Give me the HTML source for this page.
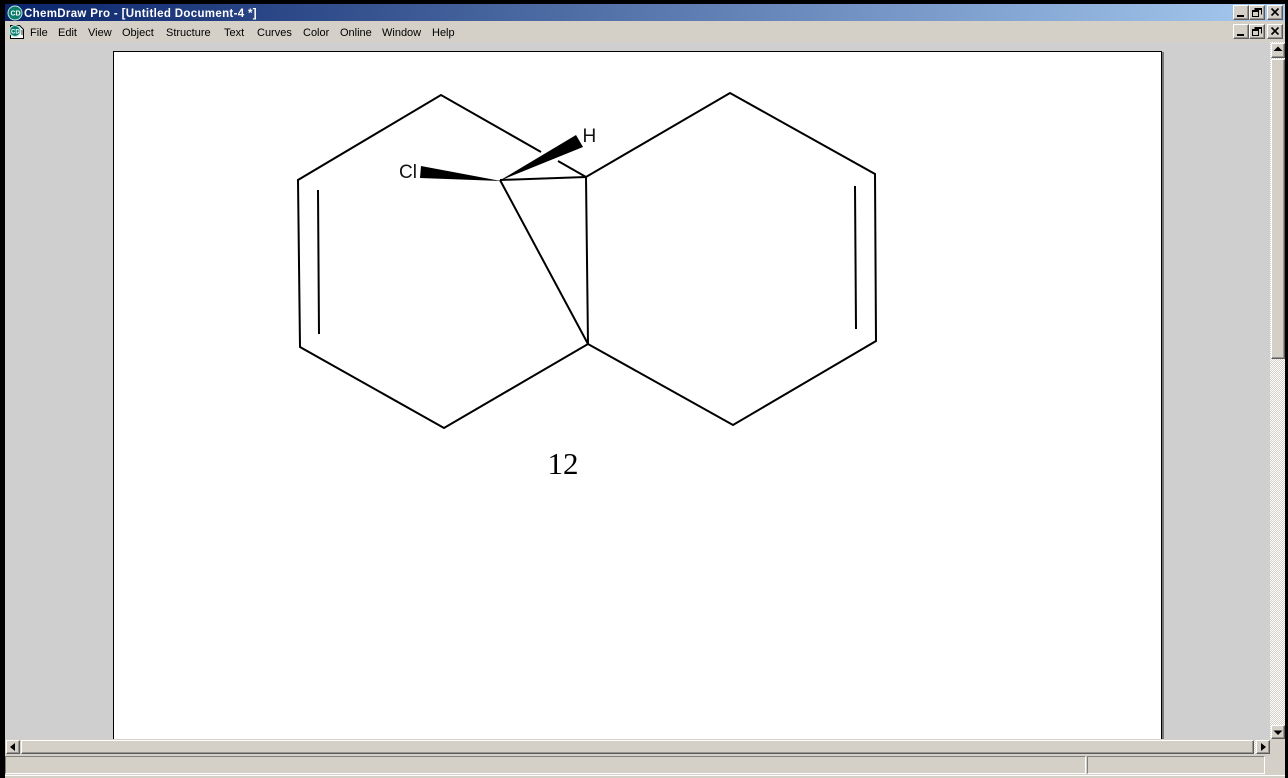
<!DOCTYPE html>
<html><head><meta charset="utf-8"><style>
html,body{margin:0;padding:0;background:#000;}
#r{position:relative;width:1288px;height:778px;overflow:hidden;background:#000;font-family:"Liberation Sans",sans-serif;}
#r div{position:absolute;box-sizing:border-box;}
.b{background:#d4d0c8;border:1px solid;border-color:#fff #5c5c5c #5c5c5c #fff;box-shadow:inset -1px -1px 0 #989590;}
.m{font-size:11px;top:27px;color:#000;line-height:13px;white-space:nowrap;}
svg{position:absolute;left:0;top:0;overflow:visible;}
</style></head><body><div id="r">
<div style="left:5px;top:4px;width:1280px;height:17px;background:linear-gradient(90deg,#0a246a,#a6caf0);"></div>
<div style="left:5px;top:21px;width:1280px;height:21px;background:#d4d0c8;"></div>
<div style="left:5px;top:42px;width:1265px;height:697px;background:#cfcfcf;"></div>
<div style="left:113px;top:51px;width:1049px;height:688px;background:#fff;border:solid #000;border-width:1px 1px 0 1px;"></div>
<div style="left:1162px;top:52px;width:2px;height:687px;background:#777;"></div>
<div style="left:1270px;top:42px;width:15px;height:697px;background:#e9e7e3;background-image:repeating-conic-gradient(#d4d0c8 0 25%,#fff 0 50%);background-size:2px 2px;"></div>
<div style="left:24px;top:7px;font-size:11.5px;font-weight:bold;color:#fff;line-height:15px;white-space:nowrap;letter-spacing:.33px;">ChemDraw Pro - [Untitled Document-4 *]</div>
<div class="m" style="left:30px;">File</div>
<div class="m" style="left:58px;">Edit</div>
<div class="m" style="left:88px;">View</div>
<div class="m" style="left:122px;">Object</div>
<div class="m" style="left:166px;">Structure</div>
<div class="m" style="left:224px;">Text</div>
<div class="m" style="left:257px;">Curves</div>
<div class="m" style="left:303px;">Color</div>
<div class="m" style="left:340px;">Online</div>
<div class="m" style="left:382px;">Window</div>
<div class="m" style="left:432px;">Help</div>
<div class="b" style="left:1233px;top:5px;width:16px;height:15px;"></div>
<div class="b" style="left:1249px;top:5px;width:16px;height:15px;"></div>
<div class="b" style="left:1267px;top:5px;width:16px;height:15px;"></div>
<div class="b" style="left:1233px;top:24px;width:16px;height:15px;"></div>
<div class="b" style="left:1249px;top:24px;width:16px;height:15px;"></div>
<div class="b" style="left:1267px;top:24px;width:16px;height:15px;"></div>
<div class="b" style="left:1271px;top:43px;width:14px;height:15px;"></div>
<div class="b" style="left:1271px;top:59px;width:14px;height:300px;"></div>
<div class="b" style="left:1271px;top:725px;width:14px;height:14px;"></div>
<div style="left:5px;top:739px;width:1265px;height:17px;background:#d4d0c8;"></div>
<div style="left:1253px;top:740px;width:3px;height:14px;background-image:repeating-conic-gradient(#d4d0c8 0 25%,#fff 0 50%);background-size:2px 2px;"></div>
<div style="left:1270px;top:739px;width:15px;height:39px;background:#d4d0c8;"></div>
<div class="b" style="left:6px;top:740px;width:14px;height:14px;"></div>
<div class="b" style="left:21px;top:740px;width:1233px;height:14px;"></div>
<div class="b" style="left:1256px;top:740px;width:14px;height:14px;"></div>
<div style="left:5px;top:754px;width:1280px;height:24px;background:#d4d0c8;"></div>
<div style="left:5px;top:756px;width:1081px;height:18px;border:1px solid;border-color:#808080 #fff #fff #808080;"></div>
<div style="left:1087px;top:756px;width:178px;height:18px;border:1px solid;border-color:#808080 #fff #fff #808080;"></div>
<div style="left:5px;top:775px;width:1280px;height:1px;background:#fff;"></div>
<svg width="1288" height="778" viewBox="0 0 1288 778">
<g fill="none" stroke="#000" stroke-width="2">
<polyline points="541,152 441,95 298,180 300,347 444,428 588,344 733,425 876,341 875,174 730,93 586,177 558,161"/>
<line x1="318" y1="190" x2="319" y2="334"/>
<line x1="855" y1="186" x2="856" y2="329"/>
<line x1="586" y1="177" x2="588" y2="344"/>
<line x1="500" y1="180" x2="588" y2="344"/>
<line x1="500" y1="180" x2="586" y2="177"/>
</g>
<polygon points="501,181 421,166 420,178" fill="#000"/>
<polygon points="499,181 576,135 583,147" fill="#000"/>
<text x="399" y="178" font-family="Liberation Sans" font-size="19" fill="#111">Cl</text>
<text x="582.500" y="142" font-family="Liberation Sans" font-size="19" fill="#111">H</text>
<text x="547.500" y="474" font-family="Liberation Serif" font-size="31" fill="#000">12</text>
<circle cx="15" cy="13" r="7" fill="#0b7d6c" stroke="#bfe6de"/>
<text x="10.500" y="15.500" font-family="Liberation Sans" font-size="7" font-weight="bold" fill="#fff">CD</text>
<path d="M10.500 25.500h9l4 4v9h-13z" fill="#fff" stroke="#000"/>
<path d="M21 30h2v5h-2z" fill="#9a9a9a"/>
<circle cx="15" cy="31" r="5.500" fill="#0b7d6c" stroke="#bfe6de"/>
<text x="11" y="33.500" font-family="Liberation Sans" font-size="6" font-weight="bold" fill="#fff">CD</text>
<g fill="#000">
<rect x="1237" y="15" width="7" height="2"/><rect x="1237" y="34" width="7" height="2"/>
<path d="M1278 46.500l4.500 4.500h-9z"/>
<path d="M1273.500 730.500h9l-4.500 4.500z"/>
<path d="M15 743v8l-5-4z"/>
<path d="M1261 743v8l5-4z"/>
</g>
<g fill="none" stroke="#000">
<path d="M1254.500 8.500h7v6M1254.500 9.500h7M1252.500 10.500h6v6h-6zM1252.500 11.500h6"/>
<path d="M1254.500 27.500h7v6M1254.500 28.500h7M1252.500 29.500h6v6h-6zM1252.500 30.500h6"/>
<path stroke-width="1.600" d="M1271.500 8.500l7 7M1278.500 8.500l-7 7M1271.500 27.500l7 7M1278.500 27.500l-7 7"/>
</g>
</svg>
</div></body></html>
